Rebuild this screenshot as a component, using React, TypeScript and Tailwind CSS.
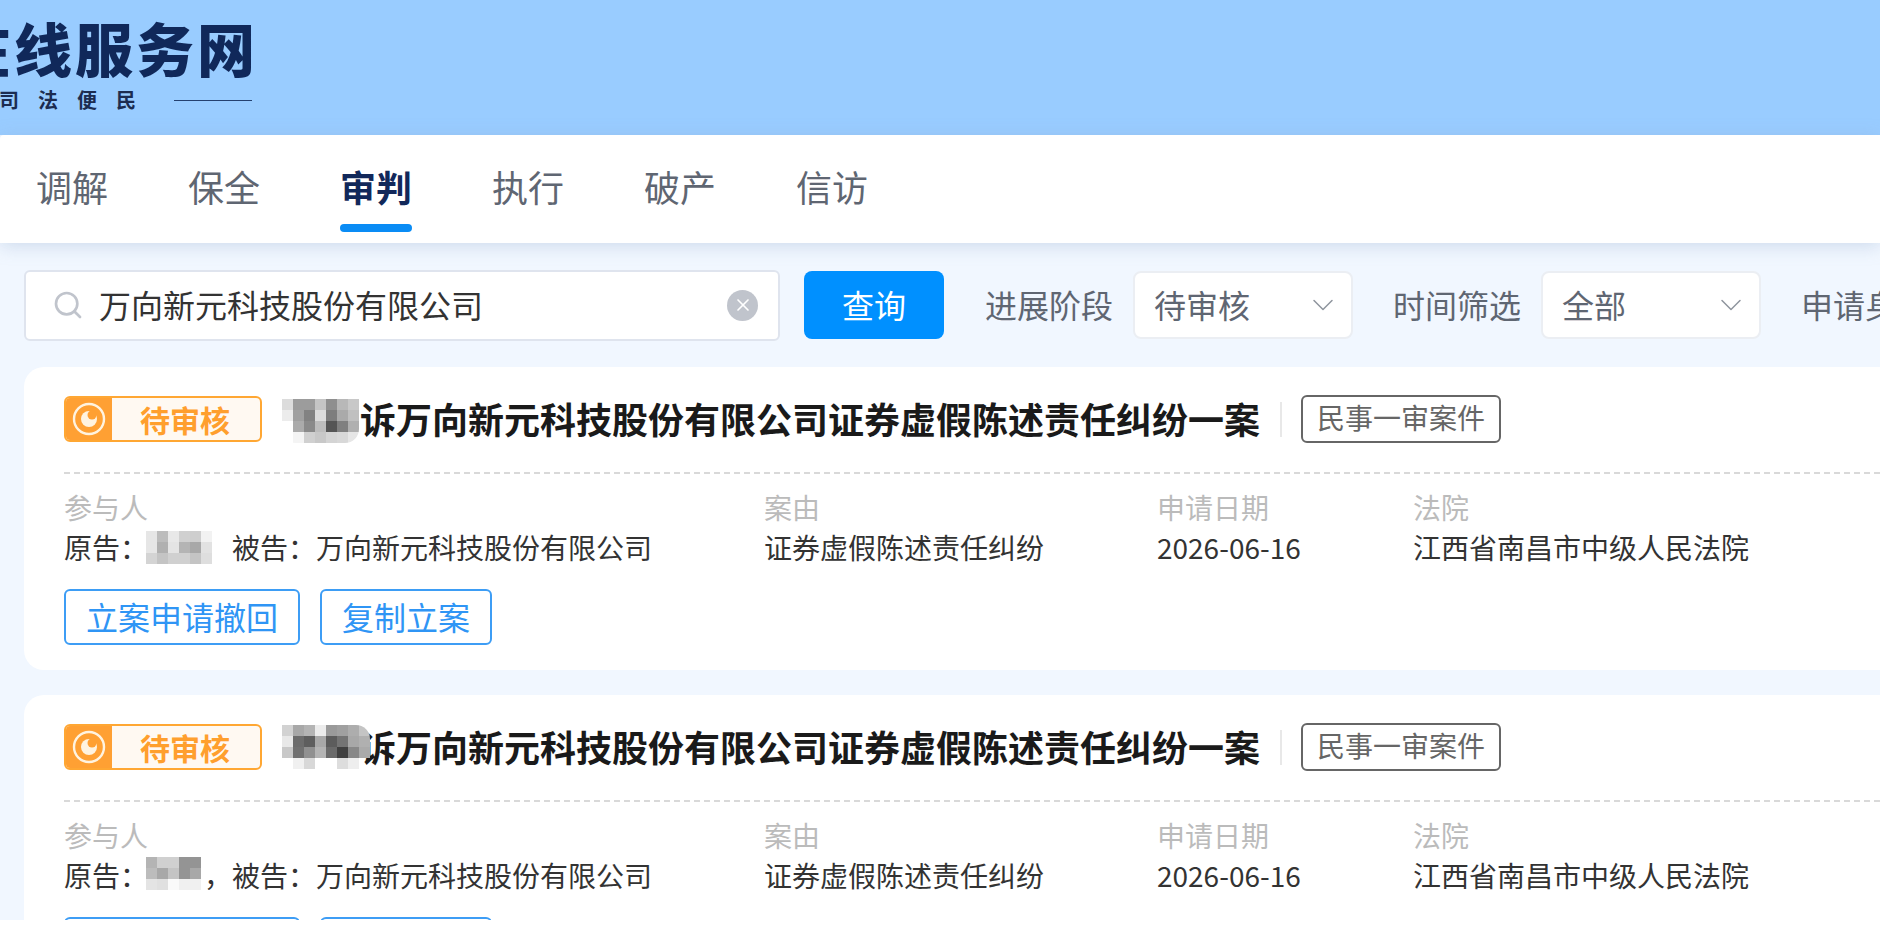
import { ChevronDown, Search, X } from 'lucide-react'

const tabs = ['调解', '保全', '审判', '执行', '破产', '信访']

const __ = 'transparent'

// hand-picked greys of the pixelated names
const mosaicA = [
  ['#dcdcdc', '#9c9c9c', '#9c9c9c', '#c5c5c5', '#8f8f8f', '#b8b8b8', '#c8c8c8'],
  ['#ececec', '#a0a0a0', '#828282', '#dcdcdc', '#7d7d7d', '#aaaaaa', '#c0c0c0'],
  ['#ffffff', '#ababab', '#8a8a8a', '#bdbdbd', '#555555', '#808080', '#b0b0b0'],
  [__, '#f4f4f4', '#d0d0d0', '#c8c8c8', '#d4d4d4', '#d8d8d8', '#e6e6e6'],
]
const mosaicB = [
  ['#d2d2d2', '#a8a8a8', '#b4b4b4', '#ececec', '#9a9a9a', '#a0a0a0', '#adadad', '#c4c4c4'],
  ['#e8e8e8', '#6c6c6c', '#5e5e5e', '#a8a8a8', '#5c5c5c', '#747474', '#a8a8a8', '#b0b0b0'],
  ['#c8c8c8', '#707070', '#909090', '#b4b4b4', '#6a6a6a', '#404040', '#888888', '#aaaaaa'],
  ['#ffffff', '#f0f0f0', '#d8d8d8', '#ffffff', '#ffffff', '#dddddd', '#eeeeee', __],
]
const mosaicC = [
  ['#e6e6e6', '#bcbcbc', '#e8e8e8', '#d0d0d0', '#cecece', '#f2f2f2'],
  ['#e6e6e6', '#b0b0b0', '#e4e4e4', '#b4b4b4', '#a8a8a8', '#e2e2e2'],
  ['#d4d4d4', '#c4c4c4', '#d0d0d0', '#d0d0d0', '#c4c4c4', '#dedede'],
]
const mosaicD = [
  ['#b4b4b4', '#d0d0d0', '#d0d0d0', '#949494', '#949494'],
  ['#bcbcbc', '#a8a8a8', '#c4c4c4', '#949494', '#a8a8a8'],
  ['#e4e4e4', '#e0e0e0', '#fafafa', '#f0f0f0', '#f0f0f0'],
]

function Mosaic({ rows, className }: { rows: string[][]; className: string }) {
  return (
    <div className={`absolute flex flex-col overflow-hidden blur-[0.6px] ${className}`}>
      {rows.map((row, r) => (
        <div key={r} className="flex">
          {row.map((c, i) => (
            <div key={i} className="h-[11px] w-[11px]" style={{ background: c }} />
          ))}
        </div>
      ))}
    </div>
  )
}

function Select({ value }: { value: string }) {
  return (
    <div className="flex h-[68px] w-[220px] shrink-0 items-center justify-between rounded-lg border-2 border-[#ebeef3] bg-white pl-[19px] pr-[10px] text-[#5f6672]">
      <span className="pb-[3px]">{value}</span>
      <ChevronDown size={36} strokeWidth={1} className="text-[#8f959e]" />
    </div>
  )
}

function StatusBadge() {
  return (
    <div className="flex h-[46px] w-[198px] shrink-0 overflow-hidden rounded-md border-2 border-[#ffa733] bg-[#fff9f2]">
      <div className="flex w-[46px] shrink-0 items-center justify-center bg-[#ffa033]">
        <svg width="34" height="34" viewBox="0 0 34 34" fill="none">
          <circle cx="17" cy="17" r="15" stroke="#fff3e0" strokeWidth="2.4" />
          <circle cx="17" cy="17" r="8" fill="#fff3e0" />
          <circle cx="20" cy="13" r="4.5" fill="#ffa033" />
        </svg>
      </div>
      <div className="flex-1 pl-[28px] text-[30px] font-bold leading-[42px] text-[#ff9f2e]">待审核</div>
    </div>
  )
}

function CaseCard({
  titleMosaic,
  titleMosaicClass,
  nameMosaic,
  nameMosaicClass,
  comma,
}: {
  titleMosaic: string[][]
  titleMosaicClass: string
  nameMosaic: string[][]
  nameMosaicClass: string
  comma: boolean
}) {
  return (
    <div className="ml-[24px] mb-[25px] rounded-l-[20px] bg-white pl-[40px] pt-[28px] pb-[25px]">
      <div className="flex h-[48px] items-center">
        <StatusBadge />
        <div className="relative ml-[20px] pl-[78px] pb-[2px] text-[36px] font-bold leading-[48px] text-[#1a1a1a]">
          诉万向新元科技股份有限公司证券虚假陈述责任纠纷一案
          <Mosaic rows={titleMosaic} className={titleMosaicClass} />
        </div>
        <div className="ml-[20px] h-[35px] w-[2px] bg-[#e8e8e8]" />
        <div className="ml-[19px] h-[48px] rounded-md border-2 border-[#666666] px-[14px] text-[28px] leading-[41px] text-[#666666]">
          民事一审案件
        </div>
      </div>
      <div className="mt-[29px] border-t-2 border-dashed border-[#d9d9d9]" />
      <div className="mt-[16px] grid grid-cols-[700px_393px_256px_1fr] text-[28px] leading-[34px]">
        <div className="text-[#bbbbbb]">参与人</div>
        <div className="text-[#bbbbbb]">案由</div>
        <div className="text-[#bbbbbb]">申请日期</div>
        <div className="text-[#bbbbbb]">法院</div>
        <div className="relative mt-[6px] text-[#333333]">
          原告：<span className={`inline-block ${comma ? 'w-[56px]' : 'w-[84px]'}`} />{comma && '，'}被告：万向新元科技股份有限公司
          <Mosaic rows={nameMosaic} className={nameMosaicClass} />
        </div>
        <div className="mt-[6px] text-[#333333]">证券虚假陈述责任纠纷</div>
        <div className="mt-[6px] text-[#333333]">2026-06-16</div>
        <div className="mt-[6px] text-[#333333]">江西省南昌市中级人民法院</div>
      </div>
      <div className="mt-[25px] flex gap-[20px] text-[32px] text-[#2f95f5]">
        <button className="h-[56px] w-[236px] rounded-md border-2 border-[#3d9df5] pb-[3px]">立案申请撤回</button>
        <button className="h-[56px] w-[172px] rounded-md border-2 border-[#3d9df5] pb-[3px]">复制立案</button>
      </div>
    </div>
  )
}

export default function App() {
  return (
    <div className="h-[925px] w-[1880px] overflow-hidden bg-white font-['Noto_Sans_CJK_SC',sans-serif]">
      <div className="h-[920px] overflow-hidden bg-[#f1f7ff]">
        <header className="h-[135px] bg-[#99ccff] pt-[12px]">
          <div className="-ml-[47px] w-[320px]">
            <div className="whitespace-nowrap text-[58px] font-black leading-[70px] tracking-[3px] text-[#10285a]">
              在线服务网
            </div>
            <div className="ml-[46px] mt-[5px] flex h-[26px] items-center whitespace-nowrap text-[20px] font-bold leading-[26px] tracking-[19px] text-[#1c2c50]">
              司法便民
              <div className="ml-[19px] h-[1px] w-[78px] bg-[#24406f]" />
            </div>
          </div>
        </header>

        <nav className="relative z-10 flex h-[108px] gap-[80px] rounded-tl-sm bg-white pl-[36px] shadow-[0_3px_18px_rgba(140,165,200,0.35)]">
          {tabs.map(t => (
            <div key={t} className="flex flex-col items-center pt-[30px]">
              <span className={`text-[36px] leading-[42px] ${t === '审判' ? 'font-bold text-[#12285a]' : 'text-[#5f6672]'}`}>
                {t}
              </span>
              {t === '审判' && <div className="mt-[17px] h-[8px] w-[72px] rounded-full bg-[#0a8cf5]" />}
            </div>
          ))}
        </nav>

        <div className="flex h-[124px] items-center whitespace-nowrap pl-[24px] text-[32px] text-[#5f6672]">
          <div className="flex h-[71px] w-[756px] shrink-0 items-center rounded-md border-2 border-[#dfe4ee] bg-white pl-[26px] pr-[20px]">
            <Search size={32} strokeWidth={2} className="shrink-0 text-[#c0c4cc]" />
            <span className="ml-[15px] flex-1 pb-[3px] text-[#333333]">万向新元科技股份有限公司</span>
            <div className="flex h-[31px] w-[31px] items-center justify-center rounded-full bg-[#c0c4cc]">
              <X size={20} strokeWidth={2} className="text-white" />
            </div>
          </div>
          <button className="ml-[24px] h-[68px] w-[140px] shrink-0 rounded-lg bg-[#0090ff] pb-[3px] text-white">查询</button>
          <span className="ml-[41px] mr-[20px] pb-[3px]">进展阶段</span>
          <Select value="待审核" />
          <span className="ml-[40px] mr-[20px] pb-[3px]">时间筛选</span>
          <Select value="全部" />
          <span className="ml-[40px] pb-[3px]">申请身份</span>
        </div>

        <CaseCard
          titleMosaic={mosaicA}
          titleMosaicClass="left-0 top-[5px] rounded-b-[14px]"
          nameMosaic={mosaicC}
          nameMosaicClass="left-[82px] top-[1px]"
          comma={false}
        />
        <CaseCard
          titleMosaic={mosaicB}
          titleMosaicClass="left-0 top-[3px] rounded-tr-[14px]"
          nameMosaic={mosaicD}
          nameMosaicClass="left-[82px] -top-[1px]"
          comma
        />
      </div>
    </div>
  )
}
